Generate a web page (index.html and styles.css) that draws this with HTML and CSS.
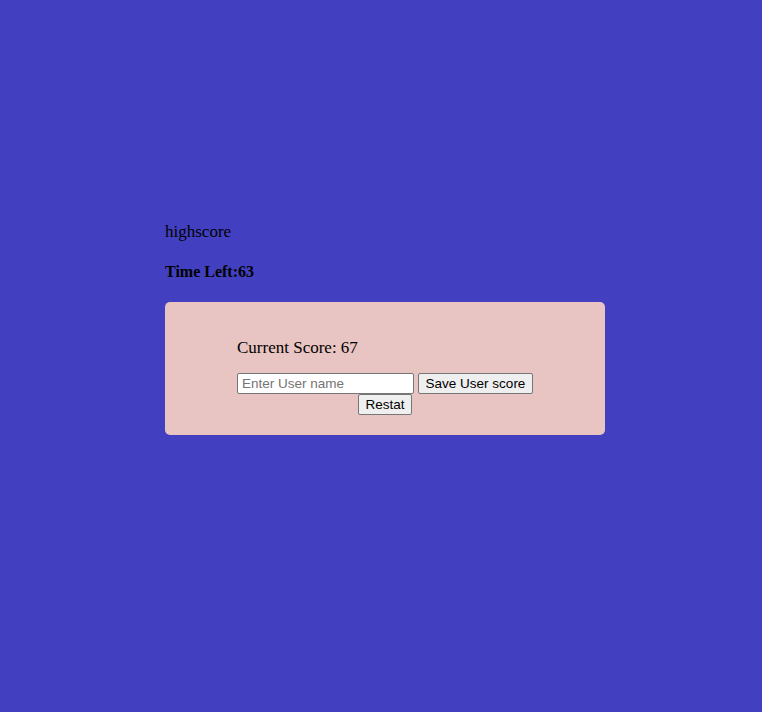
FILE: index.html
```html
<!DOCTYPE html>
<html>
<head>
<meta charset="utf-8">
<link rel="stylesheet" href="styles.css">
</head>
<body>
<main class="page">
  <div class="highscore">highscore</div>
  <div class="timer">Time Left:63</div>
  <section class="card">
    <div class="inner">
      <p class="score">Current Score: 67</p>
      <div class="controls">
        <div class="row">
          <input class="name" type="text" placeholder="Enter User name"><button class="btn save">Save User score</button>
        </div>
        <div class="row">
          <button class="btn">Restat</button>
        </div>
      </div>
    </div>
  </section>
</main>
</body>
</html>
```

FILE: styles.css
```css
html, body {
  margin: 0;
  height: 100%;
  background: #4240c0;
}
body {
  font-family: "Liberation Serif", "DejaVu Serif", serif;
  font-size: 17px;
  color: #000;
}
.page {
  padding: 222px 0 0 165px;
}
.highscore {
  line-height: 20px;
  height: 20px;
}
.timer {
  margin-top: 20px;
  line-height: 20px;
  height: 20px;
  font-weight: bold;
  font-size: 16px;
}
.card {
  margin-top: 20px;
  width: 440px;
  box-sizing: border-box;
  background: #e8c4c2;
  border-radius: 5px;
  padding: 36px 0 20px;
}
.inner {
  width: 296px;
  margin: 0 auto;
}
.score {
  margin: 0 0 15px;
  line-height: 20px;
}
.controls {
  display: flex;
  flex-direction: column;
  align-items: center;
}
.row {
  display: flex;
  white-space: nowrap;
}
.name, .btn {
  font-family: "Liberation Sans", Arial, sans-serif;
  font-size: 13.5px;
  height: 21px;
  box-sizing: border-box;
  margin: 0;
}
.name {
  width: 177px;
  border: 1px solid #767676;
  border-radius: 2px;
  padding: 0 4px;
  background: #fff;
}
.name::placeholder {
  color: #757575;
}
.btn {
  background: #efefef;
  border: 1px solid #767676;
  border-radius: 2px;
  padding: 0 6px;
  color: #000;
}
.save {
  margin-left: 4px;
  width: 115px;
  padding: 0;
}
.row + .row .btn {
  width: 54px;
  padding: 0;
}
```
